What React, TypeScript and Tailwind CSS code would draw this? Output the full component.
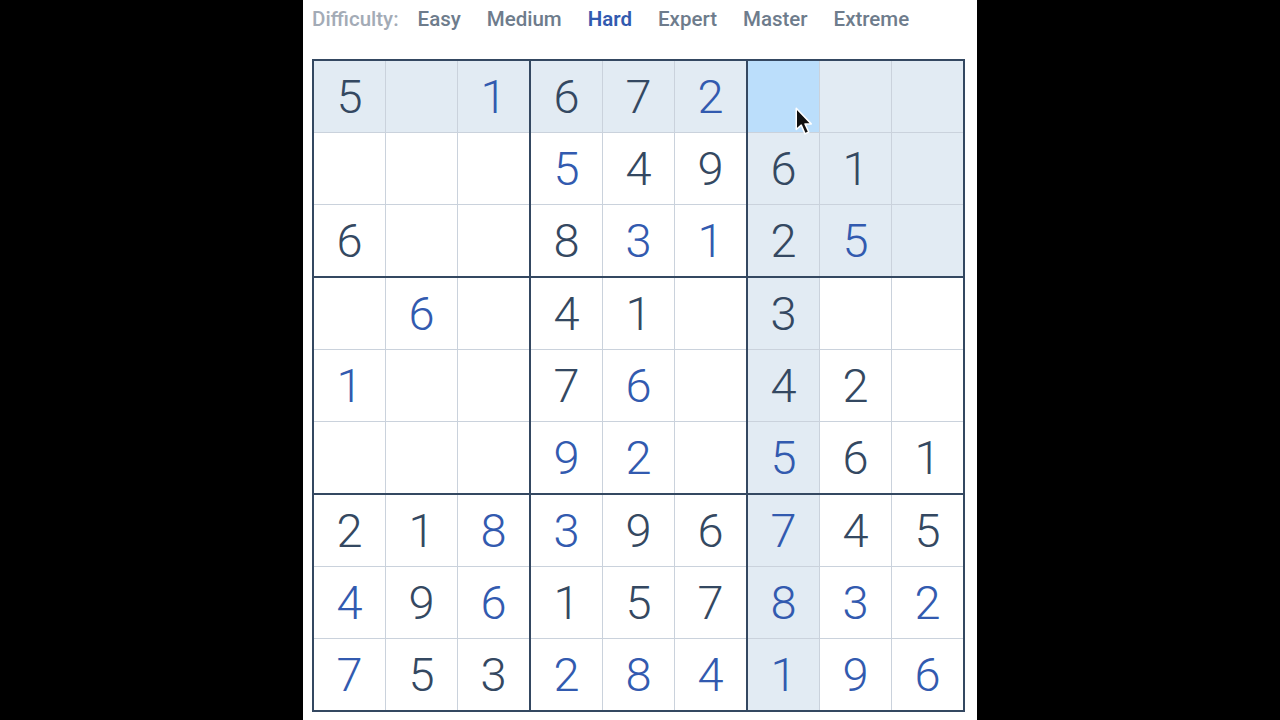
import React from 'react';

// 0 = empty, positive = given (dark), negative = entered (blue)
const board: number[][] = [
  [5, 0, -1, 6, 7, -2, 0, 0, 0],
  [0, 0, 0, -5, 4, 9, 6, 1, 0],
  [6, 0, 0, 8, -3, -1, 2, -5, 0],
  [0, -6, 0, 4, 1, 0, 3, 0, 0],
  [-1, 0, 0, 7, -6, 0, 4, 2, 0],
  [0, 0, 0, -9, -2, 0, -5, 6, 1],
  [2, 1, -8, -3, 9, 6, -7, 4, 5],
  [-4, 9, -6, 1, 5, 7, -8, -3, -2],
  [-7, 5, 3, -2, -8, -4, -1, -9, -6],
];

const levels = ['Easy', 'Medium', 'Hard', 'Expert', 'Master', 'Extreme'];

const selRow = 0;
const selCol = 6;

function Cell({ r, c }: { r: number; c: number }) {
  const v = board[r][c];
  const selected = r === selRow && c === selCol;
  const related =
    r === selRow ||
    c === selCol ||
    (Math.floor(r / 3) === Math.floor(selRow / 3) && Math.floor(c / 3) === Math.floor(selCol / 3));
  const bg = selected ? 'bg-[#bbdefb]' : related ? 'bg-[#e2ebf3]' : 'bg-white';
  const color = v < 0 ? 'text-[#325aaf]' : 'text-[#344861]';
  return (
    <div className={`${bg} ${color} h-[71px] w-[71px] flex items-center justify-center text-[47px] font-light leading-none`}>
      {v !== 0 ? Math.abs(v) : ''}
    </div>
  );
}

function Box({ br, bc }: { br: number; bc: number }) {
  const cells = [];
  for (let i = 0; i < 3; i++) {
    for (let j = 0; j < 3; j++) {
      cells.push(<Cell key={`${i}-${j}`} r={br * 3 + i} c={bc * 3 + j} />);
    }
  }
  return <div className="grid grid-cols-3 gap-px bg-[#cad2dc]">{cells}</div>;
}

export default function App() {
  return (
    <div className="w-[1280px] h-[720px] bg-black flex justify-center overflow-hidden" style={{ fontFamily: 'Roboto, "Liberation Sans", sans-serif' }}>
      <div className="w-[674px] h-full bg-white px-[9px] relative">
        <div className="flex items-center h-[37px] pt-[1px] text-[20.5px] font-medium">
          <span className="text-[#a3abb6] mr-[19px]">Difficulty:</span>
          <div className="flex gap-[26px]">
            {levels.map((l) => (
              <span key={l} className={l === 'Hard' ? 'text-[#325aaf] font-semibold' : 'text-[#6e7c8c]'}>
                {l}
              </span>
            ))}
          </div>
        </div>
        <div className="mt-[22px] w-fit border-2 border-[#344861] bg-[#344861] grid grid-cols-3 gap-[2px]">
          {[0, 1, 2].map((br) => [0, 1, 2].map((bc) => <Box key={`${br}-${bc}`} br={br} bc={bc} />))}
        </div>
        <svg className="absolute left-[492px] top-[107px]" width="20" height="30" viewBox="0 0 16 24">
          <path d="M1 1 L1 18 L5 14.5 L8 21.5 L11 20 L8 13.5 L13 13.5 Z" fill="#111" stroke="#fff" strokeWidth="1.2" strokeLinejoin="round" />
        </svg>
      </div>
    </div>
  );
}
